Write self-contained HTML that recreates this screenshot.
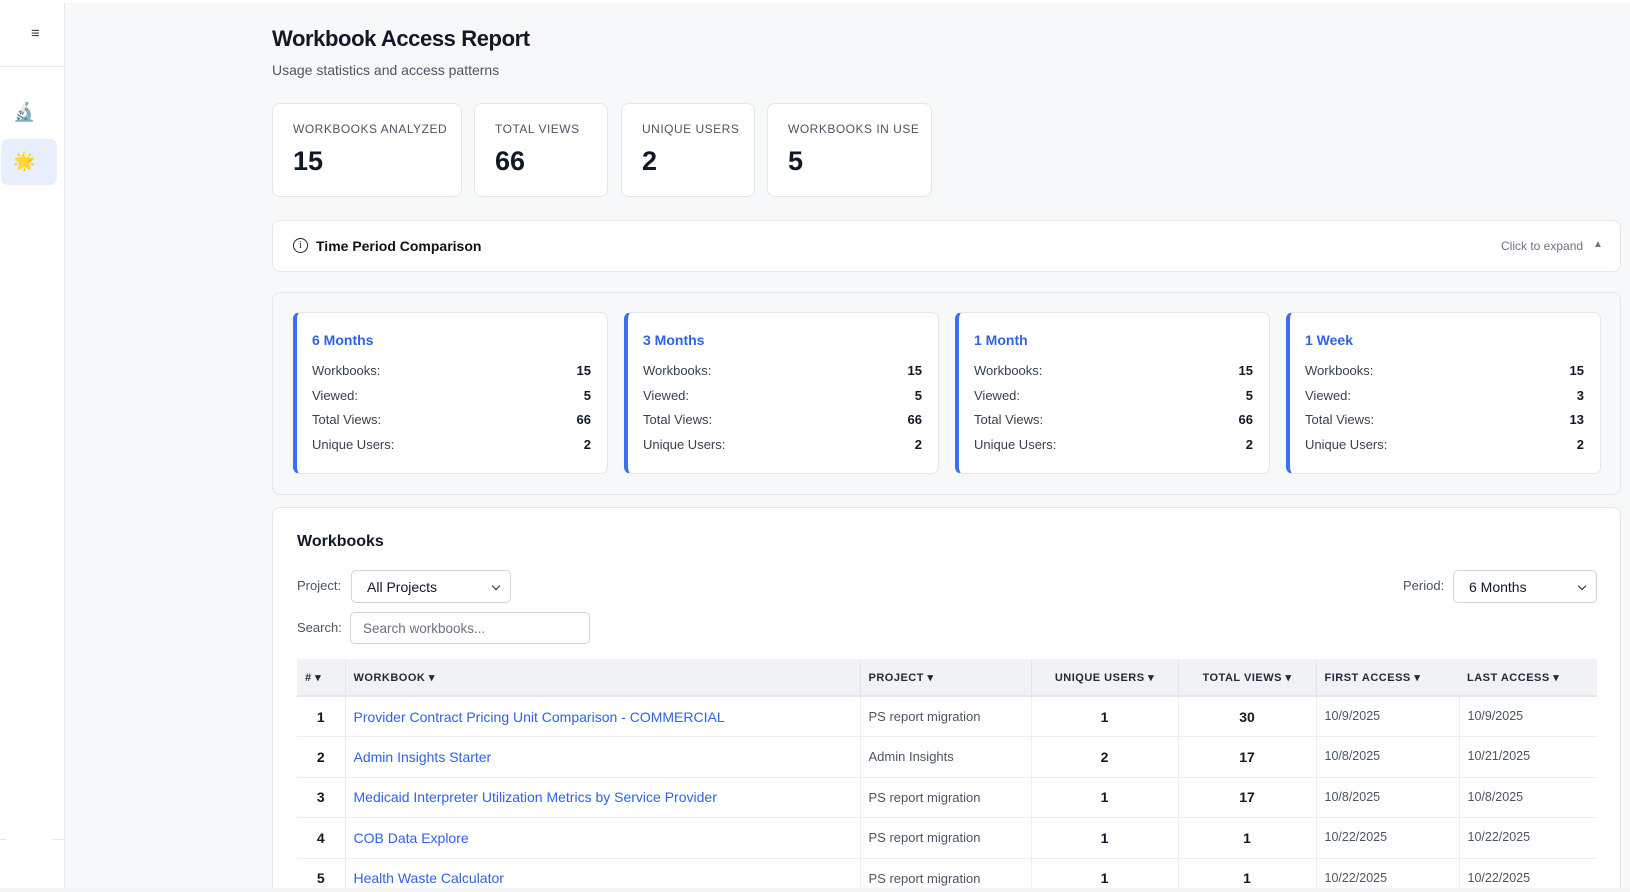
<!DOCTYPE html>
<html><head><style>
*{box-sizing:border-box;margin:0;padding:0}
html,body{width:1630px;height:892px;overflow:hidden}
body{background:#f3f4f6;font-family:"Liberation Sans",Arial,sans-serif;color:#1f2937;position:relative}
#wrap{position:absolute;left:0;top:0;width:1630px;height:888px;overflow:hidden;background:#f7f8fa}
.abs{position:absolute}
.side{left:0;top:3px;width:65px;height:885px;background:#fff;border-right:1px solid #e5e7eb}
.card{background:#fff;border:1px solid #e3e6ea;border-radius:8px}
.lbl{font-size:12px;letter-spacing:.5px;color:#4b5563;text-transform:uppercase}
.num{font-size:27px;font-weight:bold;color:#111827}
.pc{background:#fff;border:1px solid #e3e6ea;border-left:4px solid #3b6ff0;border-radius:7px;padding:0}
.pc h4{position:absolute;left:15px;top:19px;font-size:14px;color:#2f63e6}
.row{position:absolute;left:15px;right:16px;font-size:13px;color:#374151;display:flex;justify-content:space-between}
.row b{color:#111827}
table{border-collapse:collapse;width:1300px}
th{background:#f0f2f5;font-size:11px;letter-spacing:.5px;color:#1f2937;text-align:left;height:37px;padding:0 8px;border-right:1px solid #e3e6ea;border-bottom:2px solid #e3e6ea}
td{height:40.5px;border-bottom:1px solid #eceef1;border-right:1px solid #eceef1;padding:0 8px;font-size:13px;color:#4b5563;vertical-align:middle}
td.a{color:#2f63e6;font-size:14px}
td.n{text-align:center;font-weight:bold;color:#111827;font-size:14px}
td.d{font-size:12.5px;vertical-align:top;padding-top:12px}
td.p{vertical-align:top;padding-top:12px}
.sel{background:#fff;border:1px solid #d1d5db;border-radius:5px;font-size:14px;color:#111827;padding-left:15px;display:flex;align-items:center}
.sel:after{content:"";position:absolute;right:11px;top:12px;width:5px;height:5px;border-right:1.6px solid #222;border-bottom:1.6px solid #222;transform:rotate(45deg)}
.inp{background:#fff;border:1px solid #d1d5db;border-radius:5px;font-size:13.5px;color:#6b7280;padding-left:12px;display:flex;align-items:center}
</style></head><body>
<div id="wrap">
<div class="abs" style="left:0;top:0;width:1630px;height:3px;background:#fff"></div>
<div class="abs side">
 <div class="abs" style="left:31px;top:22px;font-size:15px;color:#444">≡</div>
 <div class="abs" style="left:0;top:63px;width:65px;border-top:1px solid #e5e7eb"></div>
 <div class="abs" style="left:13px;top:99px;font-size:18px">🔬</div>
 <div class="abs" style="left:1px;top:136px;width:56px;height:46px;background:#e8effc;border-radius:7px"></div>
 <div class="abs" style="left:13px;top:148px;font-size:18px">🌟</div>
 <div class="abs" style="left:0;top:836px;width:6px;border-top:1px solid #e5e7eb"></div>
 <div class="abs" style="left:52px;top:836px;width:13px;border-top:1px solid #e5e7eb"></div>
</div>
<div class="abs" style="left:272px;top:26px;font-size:22px;font-weight:bold;color:#111827;letter-spacing:-.4px">Workbook Access Report</div>
<div class="abs" style="left:272px;top:62px;font-size:14px;color:#4b5563">Usage statistics and access patterns</div>

<div class="abs card" style="left:272px;top:103px;width:190px;height:94px"><div class="abs lbl" style="left:20px;top:18px">Workbooks Analyzed</div><div class="abs num" style="left:20px;top:42px">15</div></div>
<div class="abs card" style="left:474px;top:103px;width:134px;height:94px"><div class="abs lbl" style="left:20px;top:18px">Total Views</div><div class="abs num" style="left:20px;top:42px">66</div></div>
<div class="abs card" style="left:621px;top:103px;width:134px;height:94px"><div class="abs lbl" style="left:20px;top:18px">Unique Users</div><div class="abs num" style="left:20px;top:42px">2</div></div>
<div class="abs card" style="left:767px;top:103px;width:165px;height:94px"><div class="abs lbl" style="left:20px;top:18px">Workbooks in Use</div><div class="abs num" style="left:20px;top:42px">5</div></div>

<div class="abs card" style="left:272px;top:220px;width:1349px;height:52px">
 <div class="abs" style="left:20px;top:17px;width:15px;height:15px;border:1.3px solid #222;border-radius:50%;font-size:10px;text-align:center;line-height:13px;font-family:'Liberation Serif',serif">i</div>
 <div class="abs" style="left:43px;top:17px;font-size:14px;font-weight:bold;color:#111">Time Period Comparison</div>
 <div class="abs" style="left:1228px;top:18px;font-size:12px;color:#6b7280">Click to expand</div>
 <div class="abs" style="left:1320px;top:18px;font-size:10px;color:#6b7280">▲</div>
</div>

<div class="abs" style="left:272px;top:292px;width:1349px;height:203px;background:#f7f8fa;border:1px solid #e3e6ea;border-radius:8px"></div>
<div class="abs pc" style="left:293px;top:312px;width:315px;height:162px"><h4>6 Months</h4>
 <div class="row" style="top:50px"><span>Workbooks:</span><b>15</b></div><div class="row" style="top:75px"><span>Viewed:</span><b>5</b></div><div class="row" style="top:99px"><span>Total Views:</span><b>66</b></div><div class="row" style="top:124px"><span>Unique Users:</span><b>2</b></div></div>
<div class="abs pc" style="left:624px;top:312px;width:315px;height:162px"><h4>3 Months</h4>
 <div class="row" style="top:50px"><span>Workbooks:</span><b>15</b></div><div class="row" style="top:75px"><span>Viewed:</span><b>5</b></div><div class="row" style="top:99px"><span>Total Views:</span><b>66</b></div><div class="row" style="top:124px"><span>Unique Users:</span><b>2</b></div></div>
<div class="abs pc" style="left:955px;top:312px;width:315px;height:162px"><h4>1 Month</h4>
 <div class="row" style="top:50px"><span>Workbooks:</span><b>15</b></div><div class="row" style="top:75px"><span>Viewed:</span><b>5</b></div><div class="row" style="top:99px"><span>Total Views:</span><b>66</b></div><div class="row" style="top:124px"><span>Unique Users:</span><b>2</b></div></div>
<div class="abs pc" style="left:1286px;top:312px;width:315px;height:162px"><h4>1 Week</h4>
 <div class="row" style="top:50px"><span>Workbooks:</span><b>15</b></div><div class="row" style="top:75px"><span>Viewed:</span><b>3</b></div><div class="row" style="top:99px"><span>Total Views:</span><b>13</b></div><div class="row" style="top:124px"><span>Unique Users:</span><b>2</b></div></div>

<div class="abs card" style="left:272px;top:507px;width:1349px;height:420px"></div>
<div class="abs" style="left:297px;top:533px;font-size:16px;font-weight:bold;color:#111827">Workbooks</div>
<div class="abs" style="left:297px;top:578px;font-size:13px;color:#4b5563">Project:</div>
<div class="abs sel" style="left:351px;top:570px;width:160px;height:33px">All Projects</div>
<div class="abs" style="left:1403px;top:578px;font-size:13px;color:#4b5563">Period:</div>
<div class="abs sel" style="left:1453px;top:570px;width:144px;height:33px">6 Months</div>
<div class="abs" style="left:297px;top:620px;font-size:13px;color:#4b5563">Search:</div>
<div class="abs inp" style="left:350px;top:612px;width:240px;height:32px">Search workbooks...</div>
<div class="abs" style="left:297px;top:659px">
<table>
<colgroup><col style="width:48px"><col style="width:515px"><col style="width:171px"><col style="width:147px"><col style="width:138px"><col style="width:143px"><col style="width:138px"></colgroup>
<tr><th># ▾</th><th>WORKBOOK ▾</th><th>PROJECT ▾</th><th style="text-align:center">UNIQUE USERS ▾</th><th style="text-align:center">TOTAL VIEWS ▾</th><th style="border-right:none">FIRST ACCESS ▾</th><th style="border-right:none">LAST ACCESS ▾</th></tr>
<tr><td class="n">1</td><td class="a">Provider Contract Pricing Unit Comparison - COMMERCIAL</td><td class="p">PS report migration</td><td class="n">1</td><td class="n">30</td><td class="d">10/9/2025</td><td class="d" style="border-right:none">10/9/2025</td></tr>
<tr><td class="n">2</td><td class="a">Admin Insights Starter</td><td class="p">Admin Insights</td><td class="n">2</td><td class="n">17</td><td class="d">10/8/2025</td><td class="d" style="border-right:none">10/21/2025</td></tr>
<tr><td class="n">3</td><td class="a">Medicaid Interpreter Utilization Metrics by Service Provider</td><td class="p">PS report migration</td><td class="n">1</td><td class="n">17</td><td class="d">10/8/2025</td><td class="d" style="border-right:none">10/8/2025</td></tr>
<tr><td class="n">4</td><td class="a">COB Data Explore</td><td class="p">PS report migration</td><td class="n">1</td><td class="n">1</td><td class="d">10/22/2025</td><td class="d" style="border-right:none">10/22/2025</td></tr>
<tr><td class="n">5</td><td class="a">Health Waste Calculator</td><td class="p">PS report migration</td><td class="n">1</td><td class="n">1</td><td class="d">10/22/2025</td><td class="d" style="border-right:none">10/22/2025</td></tr>
</table></div>
</div>
</body></html>
